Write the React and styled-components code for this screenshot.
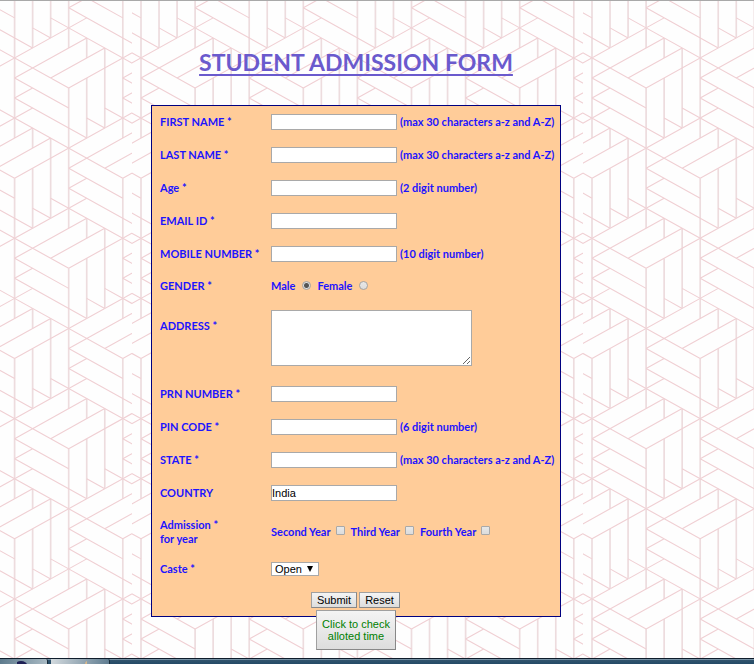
import React from "react";
import styled, { createGlobalStyle } from "styled-components";

const GlobalStyle = createGlobalStyle`
  *, *::before, *::after { box-sizing: border-box; }
  body {
    margin: 0;
    background: #fefefe;
    font-family: Lato, "Open Sans", sans-serif;
  }
`;

const Page = styled.div`
  position: relative;
  isolation: isolate;
  min-height: 100vh;
  display: flex;
  flex-direction: column;
  border-top: 1px solid #a9a9a9;
`;

const Wallpaper = styled.svg`
  position: absolute;
  inset: 0;
  z-index: -1;
  width: 100%;
  height: 100%;
`;

const Main = styled.main`
  flex: 1;
  display: flex;
  flex-direction: column;
  align-items: center;
  padding: 46px 42px 0 0;
`;

const Title = styled.h1`
  margin: 0 0 28px;
  font-size: 23px;
  line-height: 30px;
  font-weight: 700;
  color: #6a5acd;
  text-decoration: underline;
  text-decoration-thickness: 2px;
  text-underline-offset: 3px;
  text-decoration-skip-ink: none;
`;

const Form = styled.form`
  width: 410px;
  max-width: 100%;
  background: #ffcc99;
  border: 1px solid #000080;
  color: #1c14ff;
  font-size: 11px;
  line-height: 14px;
  font-weight: 700;
`;

const Row = styled.div`
  display: grid;
  grid-template-columns: 111px 1fr;
  align-items: ${(p) => (p.$top ? "start" : "center")};
  min-height: ${(p) => p.$height || 33}px;
  padding: ${(p) => (p.$top ? 8 : 0)}px 8px;
`;

const Label = styled.label`
  padding-top: ${(p) => (p.$inset ? 9 : 0)}px;
  white-space: pre-line;
`;

const Controls = styled.div`
  display: flex;
  align-items: center;
  gap: ${(p) => p.$gap || 3}px;
  white-space: nowrap;
`;

const TextInput = styled.input`
  width: 126px;
  height: 16px;
  padding: 0;
  border: 1px solid #a9a9a9;
  background: #fff;
  color: #000;
  font: 11px "Liberation Sans", Arial, sans-serif;
`;

const TextArea = styled.textarea`
  display: block;
  width: 201px;
  height: 56px;
  padding: 1px;
  border: 1px solid #a9a9a9;
  background: #fff;
  font: 11px "Liberation Sans", Arial, sans-serif;
`;

const Option = styled.label`
  display: flex;
  align-items: center;
  gap: ${(p) => p.$gap}px;
`;

const Radio = styled.input`
  appearance: none;
  width: 9px;
  height: 9px;
  margin: 0 0 2px;
  border: 1px solid #a3a3a3;
  border-radius: 50%;
  background: linear-gradient(#e8e8e8, #dcdcdc);
  &:checked {
    background: radial-gradient(circle, #555 0 2px, #dedede 3px);
  }
`;

const Check = styled.input`
  appearance: none;
  width: 9px;
  height: 9px;
  margin: 0 0 2px;
  border: 1px solid #a9a9a9;
  border-radius: 1px;
  background: linear-gradient(#e8e8e8, #dcdcdc);
  &:checked { background: #555; }
`;

const SelectBox = styled.div`
  display: grid;
  width: 48px;
  align-items: center;
  & > * { grid-area: 1 / 1; }
`;

const Select = styled.select`
  appearance: none;
  width: 100%;
  height: 14px;
  padding: 0 3px;
  border: 1px solid #a9a9a9;
  border-radius: 0;
  background: #fff;
  color: #000;
  font: 11px/12px "Liberation Sans", Arial, sans-serif;
`;

const Arrow = styled.svg`
  justify-self: end;
  width: 6px;
  height: 6px;
  margin-right: 6px;
  pointer-events: none;
`;

const Actions = styled.div`
  display: flex;
  justify-content: center;
  align-items: center;
  gap: 2px;
  min-height: 32px;
  padding: 0 1px 1px 0;
`;

const Button = styled.button`
  height: ${(p) => (p.$large ? 40 : 16)}px;
  width: ${(p) => p.$width}px;
  padding: 0;
  border: 1px solid #a0a0a0;
  border-right-color: #888;
  border-bottom-color: #888;
  background: linear-gradient(#f4f4f4, #dddddd);
  color: ${(p) => (p.$large ? "#008000" : "#000")};
  font: 11px/12px "Liberation Sans", Arial, sans-serif;
`;

const AllotedSlot = styled.div`
  position: relative;
  margin-top: -7px;
`;

const Taskbar = styled.footer`
  display: flex;
  gap: 3px;
  height: 6px;
  overflow: hidden;
  border-top: 1px solid #0e1c2b;
  background: linear-gradient(#7893a6 0 1px, #31536c 1px, #234a66);
`;

const TaskItem = styled.div`
  flex: none;
  display: flex;
  justify-content: center;
  align-items: flex-end;
  width: ${(p) => p.$width}px;
  border-right: 1px solid #1a2c3a;
  border-radius: 0 2px 0 0;
  background: linear-gradient(100deg, ${(p) => p.$from}, ${(p) => p.$to});
`;

const TaskIcon = styled.svg`
  display: block;
  width: 14px;
  height: 3px;
`;

const STEP_X = 54.1;
const STEP_Y = 541 / 18;
const TILE_W = 451;
const TILE_H = 541;

const BASE = [
  [0, 0, 7 / 3, 0],
  [0, 1 / 3, 1, 1 / 3],
  [-1 / 3, 2 / 3, 1, 2 / 3],
  [-2 / 3, 1 / 3, -1 / 3, 1 / 3],
];

const turn = ([a, b, c, d]) => [b - a, -a, d - c, -c];
const turned = BASE.map(turn);
const slanted = [...turned, ...turned.map(turn)];

const point = (a, b) =>
  `${(STEP_X * b).toFixed(2)} ${(STEP_Y * (2 * a - b)).toFixed(2)}`;
const toPath = (lines) =>
  lines.map(([a, b, c, d]) => `M${point(a, b)}L${point(c, d)}`).join("");

const UPRIGHT = toPath(BASE);
const SLANTED = toPath(slanted);

const centres = [];
for (let col = -3; col <= 12; col += 1) {
  for (let row = -1; row <= 4; row += 1) {
    const shift = col % 2 === 0 ? -STEP_Y * 3 : 0;
    centres.push([9 + col * STEP_X, 87 + shift + row * STEP_Y * 6]);
  }
}

function Weave() {
  return (
    <Wallpaper aria-hidden="true">
      <defs>
        <g id="knot" fill="none">
          <path d={UPRIGHT} stroke="#eddcde" strokeWidth="1.7" />
          <path d={SLANTED} stroke="#f0cfd3" strokeWidth="1.1" />
        </g>
        <pattern
          id="weave"
          x="132"
          y="0"
          width={TILE_W}
          height={TILE_H}
          patternUnits="userSpaceOnUse"
        >
          {centres.map(([x, y]) => (
            <use key={`${x},${y}`} href="#knot" x={x} y={y} />
          ))}
        </pattern>
      </defs>
      <rect width="100%" height="100%" fill="url(#weave)" />
    </Wallpaper>
  );
}

function TextRow({ id, label, hint, value, height }) {
  return (
    <Row $height={height}>
      <Label htmlFor={id}>{label}</Label>
      <Controls>
        <TextInput id={id} type="text" defaultValue={value} />
        {hint && <span>{hint}</span>}
      </Controls>
    </Row>
  );
}

const LETTERS = "(max 30 characters a-z and A-Z)";

export default function App() {
  return (
    <Page>
      <GlobalStyle />
      <Weave />
      <Main>
        <Title>STUDENT ADMISSION FORM</Title>
        <Form onSubmit={(e) => e.preventDefault()}>
          <TextRow id="first" label="FIRST NAME *" hint={LETTERS} height={32} />
          <TextRow id="last" label="LAST NAME *" hint={LETTERS} />
          <TextRow id="age" label="Age *" hint="(2 digit number)" />
          <TextRow id="email" label="EMAIL ID *" />
          <TextRow id="mobile" label="MOBILE NUMBER *" hint="(10 digit number)" />
          <Row $height={32} role="radiogroup" aria-labelledby="gender">
            <Label as="span" id="gender">GENDER *</Label>
            <Controls $gap={6}>
              <Option $gap={7}>
                Male <Radio type="radio" name="gender" defaultChecked />
              </Option>
              <Option $gap={7}>
                Female <Radio type="radio" name="gender" />
              </Option>
            </Controls>
          </Row>
          <Row $height={75} $top>
            <Label htmlFor="address" $inset>ADDRESS *</Label>
            <TextArea id="address" />
          </Row>
          <TextRow id="prn" label="PRN NUMBER *" />
          <TextRow id="pin" label="PIN CODE *" hint="(6 digit number)" />
          <TextRow id="state" label="STATE *" hint={LETTERS} />
          <TextRow id="country" label="COUNTRY" value="India" />
          <Row $height={45} role="group" aria-labelledby="year">
            <Label as="span" id="year">{"Admission *\nfor year"}</Label>
            <Controls $gap={6}>
              <Option $gap={5}>Second Year <Check type="checkbox" /></Option>
              <Option $gap={5}>Third Year <Check type="checkbox" /></Option>
              <Option $gap={5}>Fourth Year <Check type="checkbox" /></Option>
            </Controls>
          </Row>
          <Row $height={30}>
            <Label htmlFor="caste">Caste *</Label>
            <SelectBox>
              <Select id="caste">
                <option>Open</option>
              </Select>
              <Arrow viewBox="0 0 7 7" aria-hidden="true">
                <path d="M0 0H7L3.5 7Z" fill="#000" />
              </Arrow>
            </SelectBox>
          </Row>
          <Actions>
            <Button type="submit" $width={46}>Submit</Button>
            <Button type="reset" $width={41}>Reset</Button>
          </Actions>
        </Form>
        <AllotedSlot>
          <Button type="button" $large $width={80}>
            Click to check
            <br />
            alloted time
          </Button>
        </AllotedSlot>
      </Main>
      <Taskbar>
        <TaskItem $width={48} $from="#5d7a8c" $to="#a9bac4">
          <TaskIcon viewBox="0 0 14 3" aria-hidden="true">
            <ellipse cx="4" cy="4" rx="6" ry="4" fill="#1d1f55" />
          </TaskIcon>
        </TaskItem>
        <TaskItem $width={59} $from="#d3dade" $to="#5f7c90">
          <TaskIcon viewBox="0 0 14 3" aria-hidden="true">
            <circle cx="15" cy="3" r="3" fill="#d9b88a" />
          </TaskIcon>
        </TaskItem>
      </Taskbar>
    </Page>
  );
}
